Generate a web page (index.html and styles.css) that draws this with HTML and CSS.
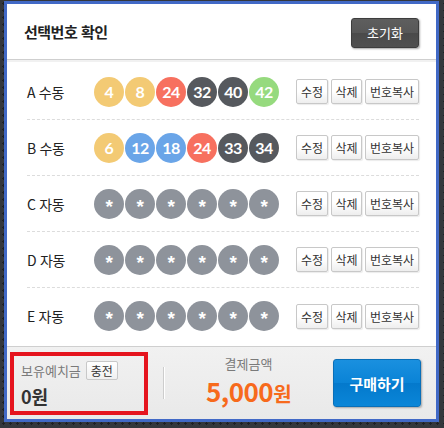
FILE: index.html
```html
<!DOCTYPE html>
<html lang="ko">
<head>
<meta charset="utf-8">
<link rel="stylesheet" href="styles.css">
</head>
<body>
<div class="panel">
  <div class="head">
    <h2 class="title">선택번호 확인</h2>
    <button class="reset">초기화</button>
  </div>
  <div class="rows">
    <div class="row">
      <span class="label">A 수동</span>
      <div class="balls">
        <span class="ball y">4</span><span class="ball y">8</span><span class="ball r">24</span><span class="ball d">32</span><span class="ball d">40</span><span class="ball g">42</span>
      </div>
      <div class="acts"><button class="act">수정</button><button class="act">삭제</button><button class="act">번호복사</button></div>
    </div>
    <div class="row">
      <span class="label">B 수동</span>
      <div class="balls">
        <span class="ball y">6</span><span class="ball b">12</span><span class="ball b">18</span><span class="ball r">24</span><span class="ball d">33</span><span class="ball d">34</span>
      </div>
      <div class="acts"><button class="act">수정</button><button class="act">삭제</button><button class="act">번호복사</button></div>
    </div>
    <div class="row">
      <span class="label">C 자동</span>
      <div class="balls">
        <span class="ball s">*</span><span class="ball s">*</span><span class="ball s">*</span><span class="ball s">*</span><span class="ball s">*</span><span class="ball s">*</span>
      </div>
      <div class="acts"><button class="act">수정</button><button class="act">삭제</button><button class="act">번호복사</button></div>
    </div>
    <div class="row">
      <span class="label">D 자동</span>
      <div class="balls">
        <span class="ball s">*</span><span class="ball s">*</span><span class="ball s">*</span><span class="ball s">*</span><span class="ball s">*</span><span class="ball s">*</span>
      </div>
      <div class="acts"><button class="act">수정</button><button class="act">삭제</button><button class="act">번호복사</button></div>
    </div>
    <div class="row">
      <span class="label">E 자동</span>
      <div class="balls">
        <span class="ball s">*</span><span class="ball s">*</span><span class="ball s">*</span><span class="ball s">*</span><span class="ball s">*</span><span class="ball s">*</span>
      </div>
      <div class="acts"><button class="act">수정</button><button class="act">삭제</button><button class="act">번호복사</button></div>
    </div>
  </div>
  <div class="foot">
    <div class="deposit">
      <div class="dep-top"><span class="muted">보유예치금</span><button class="charge">충전</button></div>
      <div class="dep-val">0원</div>
    </div>
    <div class="divider"></div>
    <div class="pay">
      <div class="muted">결제금액</div>
      <div class="amount">5,000<span class="won">원</span></div>
    </div>
    <button class="buy">구매하기</button>
  </div>
</div>
</body>
</html>
```
FILE: styles.css
```css
* { box-sizing: border-box; }
html, body { margin: 0; height: 100%; }
body {
  background-color: #34373c;
  background-image: radial-gradient(circle, #1e2024 1px, transparent 1.2px);
  background-size: 7px 7px;
  padding: 1px 5px 0 4px;
  font-family: "Noto Sans CJK KR", "Noto Sans", sans-serif;
  color: #222;
}
.panel {
  width: 435px;
  height: 421px;
  border: 3px solid #4169c6;
  background: #fff;
  display: flex;
  flex-direction: column;
}
.head {
  height: 56px;
  flex: none;
  display: flex;
  align-items: center;
  justify-content: space-between;
  padding: 0 17px 0 17px;
  border-bottom: 1px solid #cfcfcf;
}
.title {
  margin: 0;
  font-size: 15px;
  font-weight: 700;
  color: #222;
  letter-spacing: -0.5px;
}
.reset {
  width: 68px;
  height: 30px;
  margin-top: 2px;
  border: 1px solid #3d3d3d;
  border-radius: 3px;
  background: linear-gradient(#5e5e5e 0%, #575757 50%, #4a4a4a 51%, #505050 100%);
  box-shadow: 1px 1px 2px rgba(0,0,0,0.35);
  color: #fff;
  font-family: inherit;
  font-size: 13px;
  padding: 0;
}
.rows {
  flex: none;
  padding: 2px 17px 2px 20px;
  border-top: 2px solid #f1f1f1;
}
.row {
  height: 56px;
  display: flex;
  align-items: center;
  border-bottom: 1px dashed #dcdcdc;
}
.row:last-child { border-bottom: none; }
.label {
  width: 67px;
  font-size: 14px;
  color: #222;
  letter-spacing: -0.3px;
}
.balls { display: flex; gap: 1px; }
.ball {
  width: 30px;
  height: 30px;
  border-radius: 50%;
  color: #fff;
  font-family: "Lato", "Noto Sans", sans-serif;
  font-weight: 700;
  font-size: 16px;
  display: flex;
  align-items: center;
  justify-content: center;
  letter-spacing: -0.5px;
}
.y { background: #f3ca74; }
.r { background: #f7705f; }
.d { background: #56595e; }
.b { background: #6aa5e8; }
.g { background: #96da7e; }
.s { background: #8e939b; font-family: "Liberation Sans", sans-serif; font-size: 19px; padding-top: 6px; }
.acts { display: flex; gap: 3px; margin-left: 17px; }
.act {
  height: 25px;
  padding: 0 3px;
  border: 1px solid #c8c8c8;
  border-radius: 2px;
  background: linear-gradient(#fff 0%, #fff 50%, #eee 100%);
  box-shadow: 1px 1px 1px rgba(0,0,0,0.08);
  color: #333;
  font-family: inherit;
  font-size: 12px;
}
.act:nth-child(1) { width: 32px; }
.act:nth-child(2) { width: 31px; }
.act:nth-child(3) { width: 54px; }
.foot {
  flex: 1;
  display: flex;
  align-items: center;
  border-top: 1px solid #cfcfcf;
  background: linear-gradient(#f1f1f1, #e9e9e9);
  padding: 0 15px 0 3px;
}
.deposit {
  width: 138px;
  height: 63px;
  border: 4px solid #e5141e;
  padding: 5px 0 0 7px;
}
.dep-top { display: flex; align-items: center; gap: 5px; height: 20px; }
.muted { color: #7a7a7a; font-size: 13px; line-height: 18px; }
.charge {
  width: 32px;
  height: 19px;
  padding: 0;
  border: 1px solid #c8c8c8;
  border-radius: 2px;
  background: linear-gradient(#fff, #f0f0f0);
  color: #333;
  font-family: inherit;
  font-size: 12px;
}
.dep-val {
  font-size: 18px;
  font-weight: 700;
  color: #333;
  margin-top: 3px;
  line-height: 24px;
}
.divider {
  width: 1px;
  height: 32px;
  margin-left: 15px;
  background: #cdcdcd;
  box-shadow: 1px 0 0 #fff;
}
.pay {
  flex: 1;
  display: flex;
  flex-direction: column;
  align-items: center;
  margin-top: -2px;
}
.amount {
  color: #f76a1c;
  font-size: 26px;
  font-weight: 700;
  line-height: 30px;
  margin-top: 3px;
  letter-spacing: -0.5px;
}
.won { font-size: 20px; }
.buy {
  width: 88px;
  height: 48px;
  border: 1px solid #0a6fb8;
  border-radius: 3px;
  background: linear-gradient(#1a90df 0%, #0a83d6 50%, #0479cc 51%, #0a86d8 100%);
  box-shadow: 1px 1px 2px rgba(0,0,0,0.3);
  color: #fff;
  font-family: inherit;
  font-size: 15px;
  font-weight: 700;
  padding: 0;
}
```
